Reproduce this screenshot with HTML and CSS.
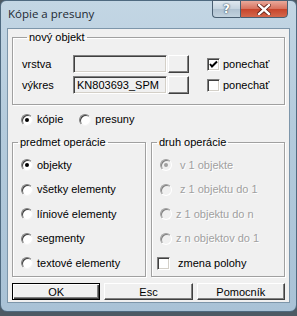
FILE: index.html
```html
<!DOCTYPE html>
<html>
<head>
  <title>Kópie a presuny</title>
  <link rel="stylesheet" href="styles.css">
</head>
<body>
  <div class="window">
    <div class="titlebar">
      <span class="title">Kópie a presuny</span>
      <div class="caption-buttons">
        <span class="cap-btn help">?</span>
        <span class="cap-btn close">
          <svg width="14" height="11" viewBox="0 0 14 11">
            <path d="M2 1 L12 10 M12 1 L2 10" stroke="#5a1a10" stroke-width="4" stroke-linecap="square"/>
            <path d="M2 1 L12 10 M12 1 L2 10" stroke="#fff" stroke-width="2.4" stroke-linecap="square"/>
          </svg>
        </span>
      </div>
    </div>

    <div class="client">
      <fieldset class="group group-new">
        <legend>nový objekt</legend>
        <div class="new-row">
          <span class="field-label">vrstva</span>
          <span class="textbox"></span>
          <span class="small-btn"></span>
          <span class="check checked">
            <svg width="9" height="9" viewBox="0 0 9 9"><path d="M1 4 L3 6.5 L8 1.5" stroke="#000" stroke-width="2" fill="none"/></svg>
          </span>
          <span class="check-label">ponechať</span>
        </div>
        <div class="new-row">
          <span class="field-label">výkres</span>
          <span class="textbox">KN803693_SPM</span>
          <span class="small-btn"></span>
          <span class="check"></span>
          <span class="check-label">ponechať</span>
        </div>
      </fieldset>

      <div class="mode-row">
        <label class="option"><span class="radio checked"></span>kópie</label>
        <label class="option"><span class="radio"></span>presuny</label>
      </div>

      <div class="groups">
        <fieldset class="group">
          <legend>predmet operácie</legend>
          <div class="option-list">
            <label class="option"><span class="radio checked"></span>objekty</label>
            <label class="option"><span class="radio"></span>všetky elementy</label>
            <label class="option"><span class="radio"></span>líniové elementy</label>
            <label class="option"><span class="radio"></span>segmenty</label>
            <label class="option"><span class="radio"></span>textové elementy</label>
          </div>
        </fieldset>
        <fieldset class="group">
          <legend>druh operácie</legend>
          <div class="option-list op-kind">
            <label class="option disabled wide"><span class="radio checked"></span>v 1 objekte</label>
            <label class="option disabled wide"><span class="radio"></span>z 1 objektu do 1</label>
            <label class="option disabled"><span class="radio"></span>z 1 objektu do n</label>
            <label class="option disabled"><span class="radio"></span>z n objektov do 1</label>
            <label class="option wide"><span class="check"></span>zmena polohy</label>
          </div>
        </fieldset>
      </div>

      <div class="buttons">
        <button class="push default">OK</button>
        <button class="push">Esc</button>
        <button class="push">Pomocník</button>
      </div>
    </div>
  </div>
</body>
</html>
```

FILE: styles.css
```css
body {
  margin: 0;
  background-color: #4d5a64;
  font-family: 'Liberation Sans', Arial, sans-serif;
  font-size: 11px;
  color: #000;
}

.window {
  width: 297px;
  height: 312px;
  box-sizing: border-box;
  border: 1px solid #4f6a80;
  border-radius: 6px 6px 7px 7px;
  background: linear-gradient(180deg, #c3d6e4 0%, #b4cbdc 40%, #a9c2d6 100%);
  display: flex;
  flex-direction: column;
}

.titlebar {
  height: 27px;
  display: flex;
  justify-content: space-between;
  align-items: flex-start;
  padding: 0 8px 0 7px;
}

.title {
  font-family: 'Open Sans', sans-serif;
  font-size: 11.5px;
  color: #1e2a33;
  margin-top: 5px;
}

.caption-buttons {
  display: flex;
  margin-top: -1px;
}

.cap-btn {
  height: 18px;
  display: flex;
  align-items: center;
  justify-content: center;
  border: 1px solid #4a5f72;
  box-sizing: border-box;
}

.help {
  width: 28px;
  border-radius: 0 0 0 4px;
  border-right: none;
  background: linear-gradient(180deg, #dfe8ef 0%, #c4d3df 50%, #afc1d0 51%, #c2d2de 100%);
  color: #fff;
  font-family: 'DejaVu Sans', sans-serif;
  font-weight: bold;
  font-size: 12px;
  text-shadow: 0 0 2px #33485a, 0 0 1px #33485a;
}

.close {
  width: 48px;
  border-radius: 0 0 4px 0;
  background: linear-gradient(180deg, #e9a99b 0%, #d7705c 50%, #c7442b 51%, #d4684c 100%);
}

.client {
  margin: 0 6px;
  height: 275px;
  box-sizing: border-box;
  border: 1px solid #7d96aa;
  background-color: #f0f0f0;
  padding: 2px 4px 0 4px;
}

.group {
  margin: 0;
  padding: 0;
  border: 1px solid #a0a0a0;
  box-shadow: inset 1px 1px 0 #fff, 1px 1px 0 #fff;
  min-width: 0;
}

.group legend {
  padding: 0 2px;
  margin-left: 5px;
  line-height: 13px;
}

.group-new {
  padding: 11px 0 10px 9px;
}

.new-row {
  display: flex;
  align-items: center;
  height: 18px;
}

.new-row + .new-row {
  margin-top: 3px;
}

.field-label {
  width: 51px;
}

.textbox {
  width: 94px;
  height: 18px;
  box-sizing: border-box;
  border: 1px solid;
  border-color: #808080 #fff #fff #808080;
  box-shadow: inset 1px 1px 0 #404040, inset -1px -1px 0 #d4d0c8;
  background-color: #f0f0f0;
  padding: 2px 3px;
  line-height: 13px;
  font-size: 11px;
}

.small-btn {
  width: 21px;
  height: 18px;
  margin-left: 1px;
  box-sizing: border-box;
  border: 1px solid;
  border-color: #fff #404040 #404040 #fff;
  box-shadow: inset -1px -1px 0 #808080;
  background-color: #f0f0f0;
}

.check {
  width: 13px;
  height: 13px;
  box-sizing: border-box;
  border: 1px solid;
  border-color: #808080 #fff #fff #808080;
  box-shadow: inset 1px 1px 0 #404040, inset -1px -1px 0 #d4d0c8;
  background-color: #fff;
  display: flex;
  align-items: center;
  justify-content: center;
  flex-shrink: 0;
}

.new-row .check {
  margin-left: 18px;
}

.check-label {
  margin-left: 3px;
}

.mode-row {
  display: flex;
  height: 14px;
  margin: 8px 0 9px 9px;
}

.mode-row .option + .option {
  margin-left: 16px;
}

.option {
  display: flex;
  align-items: center;
  height: 13px;
  line-height: 13px;
}

.radio {
  width: 12px;
  height: 12px;
  box-sizing: border-box;
  border-radius: 50%;
  border: 1px solid;
  border-color: #808080 #f4f4f4 #f4f4f4 #808080;
  box-shadow: inset 1px 1px 0 #404040;
  background-color: #fff;
  margin-right: 4px;
  display: flex;
  align-items: center;
  justify-content: center;
  flex-shrink: 0;
}

.radio.checked::after {
  content: "";
  width: 4px;
  height: 4px;
  border-radius: 50%;
  background-color: #000;
}

.groups {
  display: grid;
  grid-template-columns: 1fr 1fr;
  gap: 5px;
}

.option-list {
  display: flex;
  flex-direction: column;
  gap: 11.5px;
  padding: 9.5px 0 6.5px 8px;
}

.op-kind {
  padding-left: 8px;
}

.option.wide .radio,
.option.wide .check {
  margin-right: 8px;
}

.option.disabled {
  color: #a0a0a0;
  text-shadow: 1px 1px 0 #fff;
}

.option.disabled .radio {
  background-color: #f0f0f0;
  border-color: #a0a0a0 #fff #fff #a0a0a0;
  box-shadow: inset 1px 1px 0 #808080;
}

.option.disabled .radio.checked::after {
  background-color: #a0a0a0;
}

.op-kind .option.wide:last-child .check {
  margin-left: -3px;
  margin-right: 8px;
}

.buttons {
  display: grid;
  grid-template-columns: 1fr 1fr 1fr;
  gap: 4px;
  margin-top: 6px;
}

.push {
  height: 17px;
  padding: 0;
  font-family: 'Liberation Sans', Arial, sans-serif;
  font-size: 11px;
  color: #000;
  background-color: #f0f0f0;
  border: 1px solid;
  border-color: #fff #404040 #404040 #fff;
  box-shadow: inset -1px -1px 0 #808080;
}

.push.default {
  border: 1px solid #000;
  box-shadow: inset 1px 1px 0 #fff, inset -1px -1px 0 #404040, inset -2px -2px 0 #808080;
}
```
